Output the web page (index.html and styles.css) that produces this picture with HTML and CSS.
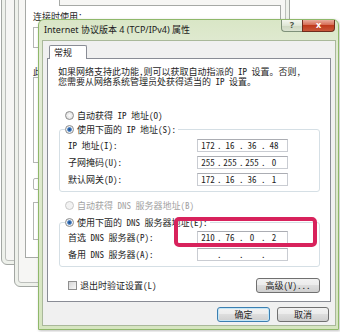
FILE: index.html
```html
<!DOCTYPE html>
<html lang="zh-CN">
<head>
    <meta charset="UTF-8">
    <meta name="viewport" content="width=device-width, initial-scale=1.0">
    <title>Internet 协议版本 4 (TCP/IPv4) 属性</title>
    <link rel="stylesheet" href="styles.css">
</head>
<body>
    <!-- windows left open behind the dialog -->
    <div class="bgwin win-a"><div class="bgwin-inner"></div></div>
    <div class="bgwin win-b">
        <div class="bgwin-inner">
            <div class="bg-tab"></div>
            <div class="bg-panel">
                <div class="bg-label">连接时使用：</div>
                <div class="bg-field"></div>
                <div class="bg-label spaced">此连接使用下列项目：</div>
                <div class="bg-list"></div>
                <div class="bg-btn"></div>
                <div class="bg-desc"></div>
            </div>
        </div>
    </div>

    <div class="dialog">
        <div class="titlebar">
            <span class="title">Internet 协议版本 4 (TCP/IPv4) 属性</span>
            <div class="caption-btns">
                <span class="cap-btn help">?</span>
                <span class="cap-btn close">x</span>
            </div>
        </div>

        <div class="dlg-body">
            <div class="tabs"><span class="tab">常规</span></div>

            <div class="tab-panel">
                <p class="intro">如果网络支持此功能，则可以获取自动指派的 IP 设置。否则，<br>您需要从网络系统管理员处获得适当的 IP 设置。</p>

                <label class="opt first"><span class="radio"></span>自动获得 IP 地址(O)</label>
                <fieldset class="group">
                    <legend><label class="opt"><span class="radio checked"></span>使用下面的 IP 地址(S):</label></legend>
                    <div class="fields">
                        <span>IP 地址(I):</span>
                        <span class="ipbox"><span class="seg">172</span><span class="dot">.</span><span class="seg">16</span><span class="dot">.</span><span class="seg">36</span><span class="dot">.</span><span class="seg">48</span></span>
                        <span>子网掩码(U):</span>
                        <span class="ipbox"><span class="seg">255</span><span class="dot">.</span><span class="seg">255</span><span class="dot">.</span><span class="seg">255</span><span class="dot">.</span><span class="seg">0</span></span>
                        <span>默认网关(D):</span>
                        <span class="ipbox"><span class="seg">172</span><span class="dot">.</span><span class="seg">16</span><span class="dot">.</span><span class="seg">36</span><span class="dot">.</span><span class="seg">1</span></span>
                    </div>
                </fieldset>

                <label class="opt disabled"><span class="radio"></span>自动获得 DNS 服务器地址(B)</label>
                <fieldset class="group dns">
                    <legend><label class="opt"><span class="radio checked"></span>使用下面的 DNS 服务器地址(E):</label></legend>
                    <div class="fields">
                        <span>首选 DNS 服务器(P):</span>
                        <span class="ipbox"><span class="seg">210</span><span class="dot">.</span><span class="seg">76</span><span class="dot">.</span><span class="seg">0</span><span class="dot">.</span><span class="seg">2</span></span>
                        <span>备用 DNS 服务器(A):</span>
                        <span class="ipbox"><span class="seg"></span><span class="dot">.</span><span class="seg"></span><span class="dot">.</span><span class="seg"></span><span class="dot">.</span><span class="seg"></span></span>
                    </div>
                </fieldset>

                <div class="check-row">
                    <label class="check"><span class="box"></span>退出时验证设置(L)</label>
                    <button class="btn btn-adv">高级(V)...</button>
                </div>
            </div>

            <div class="footer">
                <button class="btn btn-ok">确定</button>
                <button class="btn btn-cancel">取消</button>
            </div>
        </div>
    </div>

    <!-- red marker drawn over the screenshot -->
    <div class="highlight"></div>
</body>
</html>
```

FILE: styles.css
```css
* {
    box-sizing: border-box;
}

body {
    margin: 0;
    width: 340px;
    height: 332px;
    position: relative;
    overflow: hidden;
    background: #ffffff;
    font-family: "Noto Sans CJK SC", "Noto Sans", sans-serif;
    font-size: 9px;
    font-feature-settings: "hwid";
    color: #1e1e1e;
}

/* background windows */
.bgwin {
    position: absolute;
    top: -30px;
    padding: 3px;
    border: 1px solid #a3a7a3;
    border-radius: 6px;
    background: #eef1eb;
}

.win-a {
    left: 1px;
    width: 285px;
    height: 295px;
}

.win-b {
    left: 14px;
    width: 276px;
    height: 317px;
}

.bgwin-inner {
    height: 100%;
    padding: 16px 4px 0 6px;
    border: 1px solid #bcbfbb;
    border-radius: 0 0 3px 3px;
    background: #f6f6f4;
}

.bg-tab {
    position: relative;
    z-index: 1;
    width: 35px;
    height: 15px;
    border: 1px solid #a6a9a6;
    border-bottom: none;
    background: #fff;
}

.bg-panel {
    height: 253px;
    margin-top: -1px;
    padding: 6px 0 0 7px;
    border: 1px solid #a6a9a6;
    background: #fff;
}

.bg-label {
    line-height: 10px;
    white-space: nowrap;
}

.bg-label.spaced {
    margin-top: 19px;
}

.bg-field,
.bg-list,
.bg-btn,
.bg-desc {
    width: 240px;
    border: 1px solid #b4b6b4;
}

.bg-field {
    height: 21px;
    margin-top: 5px;
}

.bg-list {
    height: 86px;
}

.bg-btn {
    width: 60px;
    height: 12px;
    margin-top: 15px;
    border-radius: 2px;
}

.bg-desc {
    height: 38px;
    margin-top: 12px;
}

/* dialog */
.dialog {
    position: absolute;
    left: 38px;
    top: 19px;
    width: 301px;
    height: 311px;
    display: flex;
    flex-direction: column;
    padding: 0 2px 3px 3px;
    border: 1px solid #8fb86a;
    border-radius: 6px 6px 0 0;
    background: linear-gradient(#d9e6c6, #e4ecd8 40px, #d6e5c0);
    box-shadow: 1px 1px 3px rgba(0, 0, 0, 0.25);
}

.titlebar {
    height: 20px;
    display: flex;
    justify-content: space-between;
    align-items: flex-start;
}

.title {
    padding-left: 2px;
    line-height: 20px;
    font-family: "Noto Sans", "Noto Sans CJK SC", sans-serif;
    font-feature-settings: normal;
    color: #1b1b1b;
    white-space: nowrap;
}

.caption-btns {
    display: flex;
    margin-right: 1px;
}

.cap-btn {
    height: 12px;
    border: 1px solid #7f917a;
    border-top: none;
    text-align: center;
    font-family: "Noto Sans", sans-serif;
    font-weight: bold;
    line-height: 10px;
}

.help {
    width: 21px;
    border-right: none;
    border-radius: 0 0 0 4px;
    background: linear-gradient(#f3f6ef, #dfe6d6 50%, #cdd7c1 51%, #dbe3d1);
    color: #4a5546;
}

.close {
    width: 33px;
    border-color: #6f2c1d;
    border-radius: 0 0 4px 0;
    background: linear-gradient(#e9ad9e, #d66b53 45%, #bf3a1c 50%, #c9573a);
    color: #ffffff;
}

.dlg-body {
    flex: 1;
    display: flex;
    flex-direction: column;
    padding: 4px 4px 3px 4px;
    border: 1px solid #a9b89a;
    background: #f0f0f0;
}

.tabs {
    display: flex;
    padding-left: 2px;
}

.tab {
    position: relative;
    z-index: 1;
    width: 38px;
    height: 14px;
    padding-left: 4px;
    line-height: 13px;
    border: 1px solid #898c95;
    border-bottom: none;
    border-radius: 2px 2px 0 0;
    background: #ffffff;
}

.tab-panel {
    margin-top: -1px;
    padding: 8px 10px;
    border: 1px solid #898c95;
    background: #ffffff;
}

.intro {
    margin: 0;
    line-height: 10px;
    white-space: nowrap;
}

/* radio options */
.opt {
    display: flex;
    align-items: center;
    gap: 3px;
    height: 14px;
    margin-left: 7px;
    white-space: nowrap;
}

.opt.first {
    margin-top: 21px;
}

.opt.disabled {
    margin-top: 6px;
    color: #a2a2a2;
}

.radio {
    width: 9px;
    height: 9px;
    flex: none;
    border: 1px solid #8c8c8c;
    border-radius: 50%;
    background: radial-gradient(circle, #fdfdfd, #d6d6d6);
}

.radio.checked {
    background: radial-gradient(circle, #1d4a86 0, #3e79c0 1.8px, #eef1f4 2.8px);
}

.opt.disabled .radio {
    border-color: #c8c8c8;
    background: #f2f2f2;
}

.group {
    margin: 0 0 0 1px;
    padding: 0 5px 3px 5px;
    border: 1px solid #d5dfe5;
    border-radius: 3px;
    min-width: 0;
}

.group.dns {
    margin-top: 3px;
}

.group legend {
    padding: 0 2px 0 0;
}

.group legend .opt {
    margin-left: 0;
}

.fields {
    display: grid;
    grid-template-columns: 129px 91px;
    grid-auto-rows: 17px;
    align-items: center;
    padding: 1px 0 0 3px;
    white-space: nowrap;
}

.dns .fields {
    padding-top: 0;
}

.ipbox {
    display: flex;
    height: 13px;
    padding-left: 1px;
    border: 1px solid #c9ccd2;
    border-top-color: #abadb3;
    background: #ffffff;
    line-height: 11px;
}

.seg {
    width: 18px;
    text-align: center;
}

.dot {
    width: 4px;
    text-align: center;
}

/* bottom of the tab */
.check-row {
    display: flex;
    justify-content: space-between;
    align-items: center;
    height: 16px;
    margin-top: 10px;
    padding-left: 10px;
}

.check {
    display: flex;
    align-items: center;
    gap: 3px;
}

.box {
    width: 9px;
    height: 9px;
    border: 1px solid #8f8f8f;
    background: linear-gradient(135deg, #d6d6d6, #f8f8f8);
}

.btn {
    height: 15px;
    padding: 0;
    border: 1px solid #707070;
    border-radius: 3px;
    background: linear-gradient(#f2f2f2, #ebebeb 50%, #dddddd 50%, #cfcfcf);
    font: inherit;
    line-height: 13px;
    color: #1e1e1e;
}

.btn-adv {
    width: 64px;
}

.footer {
    display: flex;
    justify-content: flex-end;
    gap: 7px;
    margin-top: 5px;
    padding-right: 2px;
}

.btn-ok {
    width: 53px;
    border-color: #3c7fb1;
    box-shadow: inset 0 0 0 1px #c4e6f7;
}

.btn-cancel {
    width: 52px;
}

.highlight {
    position: absolute;
    left: 174px;
    top: 217px;
    width: 143px;
    height: 30px;
    border: 4px solid #d8225c;
    border-radius: 5px;
}
```
